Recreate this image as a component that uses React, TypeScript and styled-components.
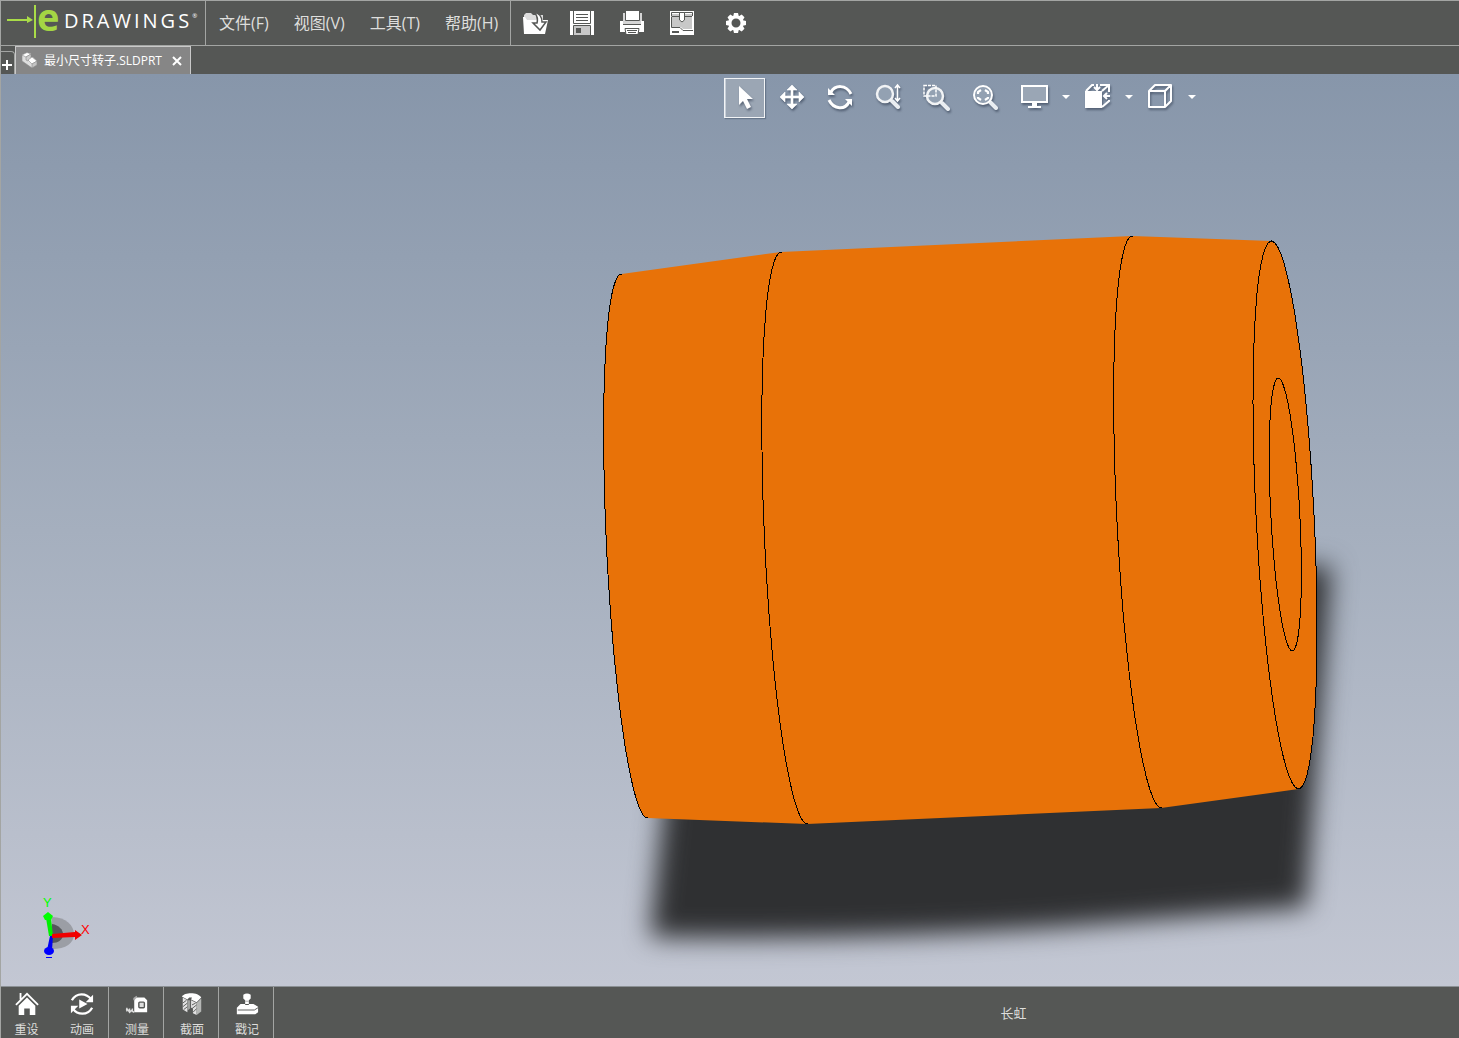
import React from "react";
import styled, { createGlobalStyle, css } from "styled-components";

const chrome = "#555755";
const line = "#a3a5a3";
const ui = `"Open Sans", "Noto Sans CJK SC", sans-serif`;

const GlobalStyle = createGlobalStyle`
  *, *::before, *::after { box-sizing: border-box; }
  html, body { margin: 0; height: 100%; }
  body { font-family: ${ui}; background: ${chrome}; }
  button { font: inherit; color: inherit; background: none; border: 0; padding: 0; margin: 0; }
  svg { display: block; }
`;

const Window = styled.div`
  display: flex;
  flex-direction: column;
  height: 100vh;
  border-top: 1px solid ${line};
  border-left: 1px solid ${line};
  background: ${chrome};
`;

const Header = styled.header`
  display: flex;
  height: 45px;
  flex: none;
  border-bottom: 1px solid ${line};
`;

const Brand = styled.a`
  display: flex;
  align-items: center;
  width: 204px;
  height: 40px;
  flex: none;
  padding-left: 6px;
  color: #fff;
  text-decoration: none;
`;

const BrandArrow = styled.svg`
  width: 30px;
  height: 34px;
`;

const BrandLetter = styled.span`
  width: 27px;
  font-size: 38px;
  line-height: 40px;
  padding-bottom: 10px;
  font-weight: 700;
  color: #a4d644;
`;

const BrandWord = styled.span`
  font-size: 20px;
  line-height: 24px;
  letter-spacing: 3px;
`;

const BrandMark = styled.sup`
  font-size: 6px;
  line-height: 8px;
  padding-bottom: 10px;
`;

const Menu = styled.nav`
  display: flex;
  border-right: 1px solid ${line};
  border-left: 1px solid ${line};
`;

const MenuButton = styled.button`
  padding: 0 12px 0 13px;
  font-size: 16px;
  line-height: 20px;
  color: #dededc;
  white-space: nowrap;
`;

const FileTools = styled.div`
  display: flex;
`;

const FileButton = styled.button<{ $width: number }>`
  display: grid;
  place-items: center;
  width: ${(p) => p.$width}px;
`;

const FileIcon = styled.svg`
  width: 26px;
  height: 24px;
`;

const TabBar = styled.div`
  display: flex;
  align-items: flex-end;
  flex: none;
  height: 28px;
`;

const AddTab = styled.button`
  display: grid;
  place-items: end start;
  width: 14px;
  height: 23px;
  padding: 0 0 4px 1px;
  border: 1px solid ${line};
  border-width: 1px 1px 0 0;
  border-top-right-radius: 4px;
`;

const Tab = styled.div`
  display: flex;
  align-items: center;
  height: 28px;
  padding: 0 8px 0 5px;
  border: 1px solid #c9c9c9;
  border-bottom: 0;
  background: #868686;
  color: #fff;
`;

const TabTitle = styled.button`
  display: flex;
  align-items: center;
  gap: 6px;
  font-size: 12px;
  line-height: 16px;
  white-space: nowrap;
`;

const TabClose = styled.button`
  margin-left: 10px;
`;

const Stage = styled.main`
  position: relative;
  flex: 1;
  min-height: 0;
  background: linear-gradient(#8796aa, #a5afbe 50%, #c3c7d3);
`;

const Scene = styled.svg`
  width: 100%;
  height: 100%;
`;

const ViewTools = styled.div`
  position: absolute;
  top: 4px;
  left: 723px;
  display: flex;
`;

const ViewButton = styled.button<{ $active?: boolean }>`
  display: grid;
  place-items: center;
  width: 48px;
  height: 40px;
  ${(p) =>
    p.$active &&
    css`
      width: 41px;
      margin-right: 3px;
      border: 1px solid #f2f4f6;
      background: #9ba6b4;
      box-shadow: inset 1px 0 #c8cfd8, 1px 1px 1px #68778b;
    `}
`;

const Group = styled.div`
  display: flex;
  padding-left: 2px;
`;

const ViewIcon = styled.svg`
  width: 28px;
  height: 28px;
  margin-bottom: 2px;
  overflow: visible;
  filter: drop-shadow(1px 2px 1px rgba(55, 68, 88, 0.65));
`;

const CaretButton = styled.button`
  display: grid;
  place-items: center;
  width: 15px;
  height: 38px;
`;

const Footer = styled.footer`
  display: flex;
  flex: none;
  height: 52px;
  border-top: 1px solid #8b9094;
`;

const FooterButton = styled.button<{ $divided?: boolean }>`
  display: flex;
  flex-direction: column;
  align-items: center;
  gap: 5px;
  width: ${(p) => (p.$divided ? 55 : 53)}px;
  padding: 5px ${(p) => (p.$divided ? "0 0 2px" : "2px 0 0")};
  border-right: ${(p) => (p.$divided ? `1px solid ${line}` : 0)};
  font-size: 12px;
  line-height: 17px;
  color: #dededc;
`;

const FooterIcon = styled.svg`
  width: 26px;
  height: 26px;
`;

const Status = styled.div`
  display: grid;
  grid-template-columns: 22fr auto 13fr;
  align-items: center;
  flex: 1;
  padding-right: 3px;
`;

const StatusText = styled.output`
  grid-column: 2;
  font-size: 13px;
  line-height: 18px;
  color: #dededc;
`;

/* A ring of the part, seen almost edge-on: (tx, ty) runs from the centre to
   its highest point, and `side` is its sideways reach at the centre height. */
type Ring = { cx: number; cy: number; tx: number; ty: number; side: number };

const rings: Record<string, Ring> = {
  back: { cx: 634.5, cy: 546, tx: -13, ty: -272, side: 28 },
  second: { cx: 794.5, cy: 538, tx: -13, ty: -286, side: 30 },
  third: { cx: 1147, cy: 522, tx: -14.5, ty: -286, side: 30 },
  front: { cx: 1285, cy: 515, tx: -13.5, ty: -274, side: 29 },
  bore: { cx: 1285.3, cy: 514.5, tx: -7, ty: -136.5, side: 14.5 },
};

function arc(r: Ring, from: number, to: number) {
  const points: string[] = [];
  for (let i = 0; i <= 60; i++) {
    const t = from + ((to - from) * i) / 60;
    const x = r.cx + r.tx * Math.cos(t) + r.side * Math.sin(t);
    const y = r.cy + r.ty * Math.cos(t);
    points.push(`${x.toFixed(1)},${y.toFixed(1)}`);
  }
  return points.join(" ");
}

const { PI } = Math;
const silhouette = [
  arc(rings.back, -PI, 0),
  "781,252 1132,236",
  arc(rings.front, 0, PI),
  "1161,808 807,824",
].join(" ");

function Model() {
  return (
    <Scene viewBox="1 74 1458 912" preserveAspectRatio="xMidYMid slice" role="img" aria-label="最小尺寸转子">
      <defs>
        <filter id="soft" x="-10%" y="-20%" width="120%" height="140%" colorInterpolationFilters="sRGB">
          <feGaussianBlur stdDeviation="13" />
        </filter>
      </defs>
      <path d="M671 740 L650 937 Q850 941 1060 927 L1306 907 L1331 566 L1200 566Z" fill="#2f3032" filter="url(#soft)" />
      <polygon points={silhouette} fill="#e87208" />
      <g fill="none" stroke="#000" strokeWidth="1" shapeRendering="crispEdges">
        <polyline points={arc(rings.back, -PI, 0)} />
        <polyline points={arc(rings.second, -PI, 0)} />
        <polyline points={arc(rings.third, -PI, 0)} />
        <polyline points={arc(rings.front, -PI, PI)} />
        <polyline points={arc(rings.bore, -PI, PI)} />
      </g>
      <g>
        <path d="M52 917 C66 917 74 926 74 934 C74 943 66 949 52 949Z" fill="#9b9ea5" />
        <path d="M52 924 C59 925 63 930 63 934 C63 940 58 943 52 943Z" fill="#55565a" />
        <path d="M49 936 L46 918 L51 918 L53 936Z" fill="#00f000" />
        <path d="M43 916 L48 912 L53 916 L51 920 H45Z" fill="#00ff00" />
        <path d="M50 936 H53 L52 950 H47Z" fill="#0000f0" />
        <ellipse cx="49" cy="951" rx="5" ry="4" fill="#0000ff" />
        <path d="M52 934 L75 932 V930 L82 935 L75 940 V937 L52 938Z" fill="#f00000" />
        <g fontFamily="'Liberation Sans', sans-serif" fontSize="13">
          <text x="43" y="907" fill="#00ff00">Y</text>
          <text x="81" y="934" fill="#ff0000">X</text>
          <path d="M46 957.5 H52" stroke="#0000ff" />
        </g>
      </g>
    </Scene>
  );
}

function Caret({ label }: { label: string }) {
  return (
    <CaretButton aria-label={label}>
      <svg width="8" height="4" viewBox="0 0 8 4"><path d="M0 0H8L4 4Z" fill="#fff" /></svg>
    </CaretButton>
  );
}

const Lens = ({ children }: { children?: React.ReactNode }) => (
  <>
    <path d="M18 18L24 24" stroke="#e9edf1" strokeWidth="4" strokeLinecap="round" />
    <circle cx="11" cy="11" r="8" fill="#93a1b2" stroke="#f1f3f5" strokeWidth="2.500" />
    {children}
  </>
);

const menus = ["文件(F)", "视图(V)", "工具(T)", "帮助(H)"];

export default function App() {
  return (
    <>
      <GlobalStyle />
      <Window>
        <Header>
          <Brand href="#" aria-label="eDRAWINGS">
            <BrandArrow viewBox="0 0 30 34" fill="none" stroke="#a9dc48">
              <path d="M0 16H22" strokeWidth="2" />
              <path d="M20 12L26 16L20 19Z" fill="#a9dc48" stroke="none" />
              <path d="M28 1V34" strokeWidth="2" />
            </BrandArrow>
            <BrandLetter>e</BrandLetter>
            <BrandWord>DRAWINGS</BrandWord>
            <BrandMark>®</BrandMark>
          </Brand>
          <Menu>
            {menus.map((m) => <MenuButton key={m}>{m}</MenuButton>)}
          </Menu>
          <FileTools>
            <FileButton $width={50} aria-label="打开">
              <FileIcon viewBox="0 0 26 24">
                <path d="M1 10V4L3 2H8L10 4H20V9Z" fill="#dcdcdc" />
                <path d="M0 6H2L4 9H25L22 23H1Z" fill="#fff" />
                <path d="M11 1C16 2 19 6 19 11H23L17 19L10 12H14C15 8 14 4 11 1Z" fill="#fff" stroke={chrome} strokeWidth="1.500" />
              </FileIcon>
            </FileButton>
            <FileButton $width={42} aria-label="保存">
              <FileIcon viewBox="0 0 26 24">
                <path d="M1 0H25V24H1Z" fill="#fff" />
                <path d="M4.500 0V12.500H21.500V0M4.500 24V14.500H21.500V24M7 3.500H19M7 6.500H19M7 9.500H19" fill="none" stroke={chrome} />
                <path d="M5 15H21V24H5Z" fill="#c8c8c8" />
                <path d="M7 17H12V22H7Z" fill={chrome} />
              </FileIcon>
            </FileButton>
            <FileButton $width={58} aria-label="打印">
              <FileIcon viewBox="0 0 26 24">
                <path d="M4 2H23V13H4Z" fill="#d5d5d5" />
                <path d="M1 10H4V13H22V10H25V21H1Z" fill="#fff" />
                <path d="M7 0H20V9H7Z" fill="#fff" />
                <path d="M6.500 0V9.500H20.500V0M4 13.500H22" fill="none" stroke={chrome} />
                <path d="M6 17.500H20L19 23.500H7Z" fill="#fff" stroke={chrome} />
                <path d="M8 19.500H18M9 21.500H17" stroke={chrome} />
              </FileIcon>
            </FileButton>
            <FileButton $width={42} aria-label="打包">
              <FileIcon viewBox="0 0 26 24">
                <path d="M1 0H25V24H1Z" fill="#fff" />
                <path d="M3 3H23V18H14L12 16H3Z" fill="#c8c8c8" />
                <path d="M2.500 5V1.500H23.500V5M2.500 5.500H10M16 5.500H23M2.500 6V16.500H11L14 19.500H24" fill="none" stroke={chrome} />
                <path d="M3 20H10V22H3Z" fill={chrome} />
                <path d="M10.500 1.500V9L13 11L15.500 9V1.500Z" fill="#fff" stroke={chrome} />
              </FileIcon>
            </FileButton>
            <FileButton $width={66} aria-label="选项">
              <FileIcon viewBox="-13 -12 26 24">
                {[0, 45, 90, 135].map((a) => (
                  <path key={a} d="M-2 -10H2L3 -6H-3ZM-2 10H2L3 6H-3Z" fill="#fff" transform={`rotate(${a})`} />
                ))}
                <circle r="6" fill={chrome} stroke="#fff" strokeWidth="3" />
              </FileIcon>
            </FileButton>
          </FileTools>
        </Header>

        <TabBar>
          <AddTab aria-label="新标签">
            <svg width="10" height="10" viewBox="0 0 10 10"><path d="M5 0V10M0 5H10" stroke="#fff" strokeWidth="2" /></svg>
          </AddTab>
          <Tab>
            <TabTitle>
              <svg width="17" height="17" viewBox="0 0 17 17" stroke="#8a8a8a" strokeWidth=".6" strokeLinejoin="round">
                <path d="M1 3L5 1L10 1L10 5L12 5L16 9V12L11 16L1 9Z" fill="#dedede" />
                <path d="M1 3L5 5L10 2L6 0.500Z" fill="#fff" />
                <path d="M5 5L10 2V6L7 9L5 8Z" fill="#ccc" />
                <path d="M7 8L11 5L16 9L11 12Z" fill="#fff" />
                <path d="M11 12L16 9V13L11 16Z" fill="#c4c4c4" />
              </svg>
              最小尺寸转子.SLDPRT
            </TabTitle>
            <TabClose aria-label="关闭">
              <svg width="10" height="10" viewBox="0 0 10 10"><path d="M1 1L9 9M9 1L1 9" stroke="#fff" strokeWidth="2" /></svg>
            </TabClose>
          </Tab>
        </TabBar>

        <Stage>
          <Model />
          <ViewTools role="toolbar" aria-label="视图工具">
            <ViewButton $active aria-label="选择">
              <ViewIcon viewBox="0 0 28 28">
                <path d="M8 3V22L12 18L16 26L20 24L16 16H22Z" fill="#fff" />
              </ViewIcon>
            </ViewButton>
            <ViewButton aria-label="平移">
              <ViewIcon viewBox="0 0 28 28">
                <path d="M14 2L19 7H15V13H21V9L26 14L21 19V15H15V21H19L14 26L9 21H13V15H7V19L2 14L7 9V13H13V7H9Z" fill="#fff" stroke="#fff" strokeWidth=".6" />
              </ViewIcon>
            </ViewButton>
            <ViewButton aria-label="旋转">
              <ViewIcon viewBox="0 0 28 28">
                <path d="M5 9C9 2 20 1 25 11M23 19C19 27 8 27 3 17" fill="none" stroke="#fff" strokeWidth="3" />
                <path d="M2 5V12H9ZM26 23V16H19Z" fill="#fff" />
              </ViewIcon>
            </ViewButton>
            <ViewButton aria-label="动态放大">
              <ViewIcon viewBox="0 0 28 28">
                <Lens><path d="M23.500 3V17M21 5L23.500 2L26 5M21 15L23.500 18L26 15" fill="none" stroke="#fff" strokeWidth="1.500" /></Lens>
              </ViewIcon>
            </ViewButton>
            <ViewButton aria-label="区域放大">
              <ViewIcon viewBox="0 0 28 28">
                <g transform="translate(2 2)"><Lens /></g>
                <path d="M2 2.500H14V13H2Z" fill="none" stroke="#fff" strokeDasharray="3 1" strokeWidth="1.500" />
              </ViewIcon>
            </ViewButton>
            <ViewButton aria-label="整屏显示">
              <ViewIcon viewBox="0 0 28 28">
                <g transform="translate(2 1)">
                  <path d="M18 18L24 24" stroke="#e9edf1" strokeWidth="4" strokeLinecap="round" />
                  <circle cx="11" cy="11" r="9" fill="#93a1b2" stroke="#fff" strokeWidth="2" />
                  <path d="M6 10V8L9 6M13 6L16 8V10M16 13V14L13 16M9 16L6 14V13" fill="none" stroke="#fff" strokeWidth="2.200" />
                </g>
              </ViewIcon>
            </ViewButton>
            <Group>
              <ViewButton aria-label="显示">
                <ViewIcon viewBox="0 0 28 28">
                  <path d="M2 3H27V19H2Z" fill="#9aa6b5" stroke="#fff" strokeWidth="2" />
                  <path d="M12 20H17V23H21V25H8V23H12Z" fill="#fff" />
                </ViewIcon>
              </ViewButton>
              <Caret label="显示选项" />
              <ViewButton aria-label="视图方向">
                <ViewIcon viewBox="0 0 28 28">
                  <path d="M2 8H19V25H2Z" fill="#fff" />
                  <path d="M3 8L9 2H11M17 2H26V9M19 8L26 2M26 17V18L19 24" fill="none" stroke="#fff" strokeWidth="2" />
                  <path d="M14 1V6M11 4L14 7L17 4M27 13H21M24 10L21 13L24 16" fill="none" stroke="#fff" strokeWidth="2" />
                </ViewIcon>
              </ViewButton>
              <Caret label="视图方向选项" />
              <ViewButton aria-label="显示样式">
                <ViewIcon viewBox="0 0 28 28">
                  <path d="M3 8H19V24H3ZM3 8L9 2H25V18L19 24M19 8L25 2" fill="none" stroke="#fff" strokeWidth="2" strokeLinejoin="round" />
                </ViewIcon>
              </ViewButton>
              <Caret label="显示样式选项" />
            </Group>
          </ViewTools>
        </Stage>

        <Footer>
          <FooterButton>
            <FooterIcon viewBox="0 0 26 26">
              <path d="M4 15L13 6L22 15V25H16V18H10V25H4Z" fill="#fff" />
              <path d="M1 14L13 2L25 14M6 8V1" fill="none" stroke="#fff" strokeWidth="2" />
            </FooterIcon>
            重设
          </FooterButton>
          <FooterButton $divided>
            <FooterIcon viewBox="0 0 26 26">
              <path d="M2 9C7 0 18 1 23 8M24 17C19 26 8 25 3 18" fill="none" stroke="#fff" strokeWidth="2.500" />
              <path d="M25 3V11H17ZM1 23V15H9ZM10 8V18L19 13Z" fill="#fff" />
            </FooterIcon>
            动画
          </FooterButton>
          <FooterButton $divided>
            <FooterIcon viewBox="0 0 26 26">
              <path d="M10 22V8L12 6H21L24 9V22Z" fill="#fff" />
              <path d="M10 9V7L13 5" fill="none" stroke="#aaa" strokeWidth="2" />
              <rect x="15" y="11" width="6" height="6" rx="1" fill="#ddd" stroke={chrome} strokeWidth="1.500" />
              <path d="M10 22L7 20L5 22L3 19L1 19M2 17V21M5 18V22M8 18V22" fill="none" stroke="#ddd" strokeWidth="1.500" />
            </FooterIcon>
            测量
          </FooterButton>
          <FooterButton $divided>
            <FooterIcon viewBox="0 0 26 26">
              <path d="M3 6L8 9V22L3 19ZM12 9L18 12V25L14 23V18L12 17Z" fill="#e2e2e2" />
              <path d="M18 12L23 7V21L18 25Z" fill="#b5b7b5" />
              <path d="M8 9H11V18L8 20Z" fill="#a0a2a0" />
              <path d="M2 5C5 0 20 0 23 6L18 11L12 8L13 6L10 6L8 8Z" fill="#fff" />
              <path d="M3 12L7 9M3 16L8 12M4 19L8 16M13 14L17 12M13 18L18 14M14 22L18 18" stroke={chrome} />
            </FooterIcon>
            截面
          </FooterButton>
          <FooterButton $divided>
            <FooterIcon viewBox="0 0 26 26">
              <path d="M9 3Q13 0 17 3V7L15 9V13H11V9L9 7Z" fill="#fff" />
              <path d="M2 17L6 13H11V14H15V13H20L25 16V22L22 24H2Z" fill="#fff" />
              <path d="M3 19.500H21L25 17" fill="none" stroke={chrome} />
              <path d="M11 10H15" stroke="#aaa" />
            </FooterIcon>
            戳记
          </FooterButton>
          <Status><StatusText>长虹</StatusText></Status>
        </Footer>
      </Window>
    </>
  );
}
